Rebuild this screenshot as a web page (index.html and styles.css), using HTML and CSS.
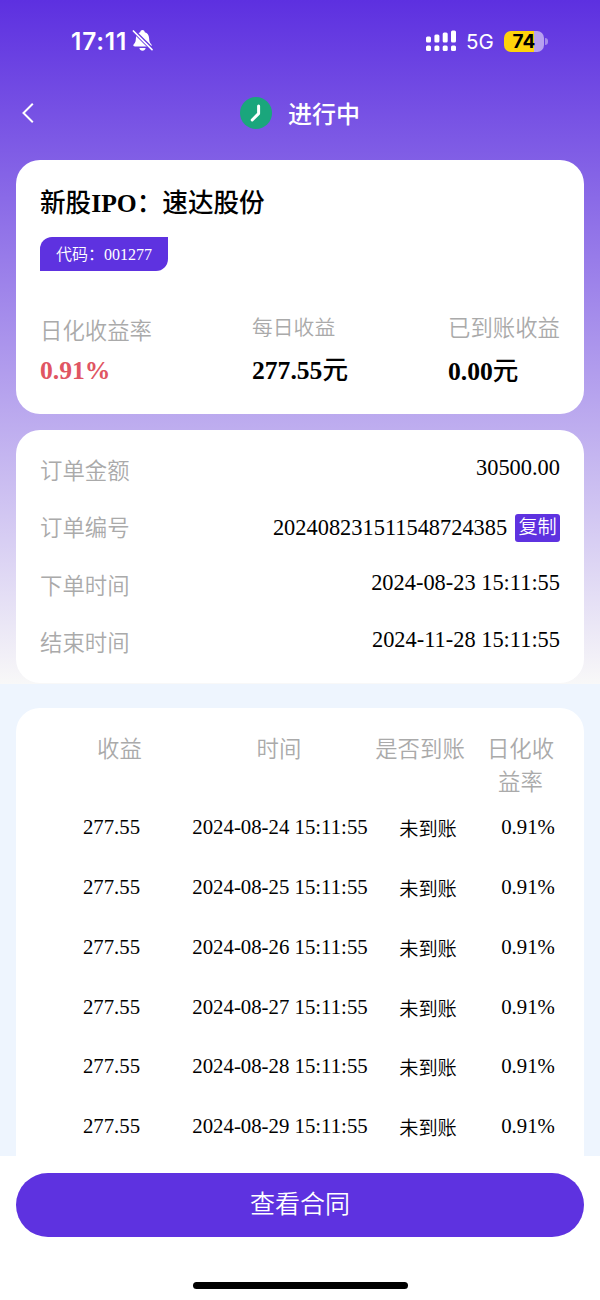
FILE: index.html
```html
<!DOCTYPE html>
<html lang="zh-CN">
<head>
    <meta charset="UTF-8">
    <meta name="viewport" content="width=device-width, initial-scale=1.0">
    <title>进行中</title>
    <link rel="stylesheet" href="styles.css">
</head>
<body>
    <div class="page">
        <div class="top">
            <div class="status-bar">
                <span class="time">17:11</span>
                <svg class="bell" width="22" height="24" viewBox="0 0 22 24">
                    <path d="M3.2 17.5C1.2 17.5.8 16.4 1.8 15.3 3.4 13.6 3.7 12 3.9 9.2C4.1 5.8 5.6 3.9 8.2 3.2C8.4 1.8 9.3 1 10.5 1C11.7 1 12.6 1.8 12.8 3.2C15.4 3.9 16.9 5.8 17.1 9.2C17.3 12 17.6 13.6 19.2 15.3C20.2 16.4 19.8 17.5 17.8 17.5Z" fill="#fff"/>
                    <path d="M7.4 19H13.6C13.3 20.7 12.1 21.7 10.5 21.7C8.9 21.7 7.7 20.7 7.4 19Z" fill="#fff"/>
                    <path d="M1.6 1.8L20.4 20.6" stroke="#673ae1" stroke-width="3.8"/>
                    <path d="M1.4 2L20 20.6" stroke="#fff" stroke-width="1.7" stroke-linecap="round"/>
                </svg>
                <svg class="signal" width="32" height="22" viewBox="0 0 32 22" fill="#fff">
                    <rect x="1" y="6.5" width="5" height="6" rx="1.5"/>
                    <rect x="9.4" y="4.5" width="5" height="8" rx="1.5"/>
                    <rect x="17.7" y="2.5" width="5" height="10" rx="1.5"/>
                    <rect x="26" y="0.5" width="5" height="12" rx="1.5"/>
                    <rect x="1" y="15.5" width="5" height="5.5" rx="1.5"/>
                    <rect x="9.4" y="15.5" width="5" height="5.5" rx="1.5"/>
                    <rect x="17.7" y="15.5" width="5" height="5.5" rx="1.5"/>
                    <rect x="26" y="15.5" width="5" height="5.5" rx="1.5"/>
                </svg>
                <span class="network">5G</span>
                <div class="battery">74</div>
                <div class="battery-cap"></div>
            </div>

            <div class="nav">
                <svg class="back" width="14" height="22" viewBox="0 0 14 22">
                    <path d="M12.8 1.8L3.5 11L12.8 20.2" fill="none" stroke="#fff" stroke-width="2"/>
                </svg>
                <svg class="clock" width="32" height="32" viewBox="0 0 32 32">
                    <circle cx="16" cy="16" r="16" fill="#1aa67c"/>
                    <path d="M18.6 9V16.6L12.2 23" fill="none" stroke="#fff" stroke-width="3" stroke-linecap="round" stroke-linejoin="round"/>
                </svg>
                <span class="nav-title">进行中</span>
            </div>

            <div class="card summary">
                <div class="stock-name"><span class="zh">新股</span>IPO<span class="zh">：速达股份</span></div>
                <div class="stock-code">代码：001277</div>
                <div class="stats">
                    <div class="stat">
                        <div class="stat-label">日化收益率</div>
                        <div class="stat-value red">0.91%</div>
                    </div>
                    <div class="stat daily">
                        <div class="stat-label">每日收益</div>
                        <div class="stat-value">277.55<span class="zh">元</span></div>
                    </div>
                    <div class="stat received">
                        <div class="stat-label">已到账收益</div>
                        <div class="stat-value">0.00<span class="zh">元</span></div>
                    </div>
                </div>
            </div>

            <div class="card order">
                <div class="order-row">
                    <span class="order-label">订单金额</span>
                    <span class="order-value">30500.00</span>
                </div>
                <div class="order-row">
                    <span class="order-label">订单编号</span>
                    <span class="order-value with-copy">202408231511548724385<button class="copy">复制</button></span>
                </div>
                <div class="order-row">
                    <span class="order-label">下单时间</span>
                    <span class="order-value">2024-08-23 15:11:55</span>
                </div>
                <div class="order-row">
                    <span class="order-label">结束时间</span>
                    <span class="order-value">2024-11-28 15:11:55</span>
                </div>
            </div>
        </div>

        <div class="list">
            <div class="list-head">
                <span>收益</span>
                <span>时间</span>
                <span>是否到账</span>
                <span>日化收益率</span>
            </div>
            <div class="list-row">
                <span>277.55</span>
                <span>2024-08-24 15:11:55</span>
                <span class="state">未到账</span>
                <span>0.91%</span>
            </div>
            <div class="list-row">
                <span>277.55</span>
                <span>2024-08-25 15:11:55</span>
                <span class="state">未到账</span>
                <span>0.91%</span>
            </div>
            <div class="list-row">
                <span>277.55</span>
                <span>2024-08-26 15:11:55</span>
                <span class="state">未到账</span>
                <span>0.91%</span>
            </div>
            <div class="list-row">
                <span>277.55</span>
                <span>2024-08-27 15:11:55</span>
                <span class="state">未到账</span>
                <span>0.91%</span>
            </div>
            <div class="list-row">
                <span>277.55</span>
                <span>2024-08-28 15:11:55</span>
                <span class="state">未到账</span>
                <span>0.91%</span>
            </div>
            <div class="list-row">
                <span>277.55</span>
                <span>2024-08-29 15:11:55</span>
                <span class="state">未到账</span>
                <span>0.91%</span>
            </div>
        </div>

        <div class="footer">
            <button class="contract">查看合同</button>
            <div class="home-bar"></div>
        </div>
    </div>
</body>
</html>
```
FILE: styles.css
```css
* {
    box-sizing: border-box;
}

body {
    margin: 0;
    font-family: "Liberation Serif", "Noto Sans CJK SC", serif;
    color: #000;
}

button {
    border: 0;
    padding: 0;
    font-family: inherit;
    color: #fff;
    background-color: #5e32e0;
}

.page {
    width: 600px;
    height: 1300px;
    display: flex;
    flex-direction: column;
    overflow: hidden;
    background-color: #eef5fe;
}

.top {
    flex: none;
    height: 683.5px;
    padding: 0 16px;
    background: linear-gradient(#5d30e0, #f8f8f8);
}

/* status bar */
.status-bar {
    height: 82px;
    padding: 0 36px 0 55px;
    display: flex;
    align-items: center;
    color: #fff;
    font-family: Inter, sans-serif;
}

.time {
    width: 61px;
    font-size: 24.5px;
    font-weight: 600;
    letter-spacing: 0.8px;
}

.signal {
    margin-left: auto;
    margin-right: 9px;
}

.network {
    width: 38px;
    font-size: 20.5px;
}

.battery {
    width: 40px;
    height: 21px;
    border-radius: 7px;
    background: linear-gradient(90deg, #fed30b 75%, #b7a0f0 75%);
    color: #000;
    font-size: 19px;
    font-weight: 700;
    line-height: 21px;
    text-align: center;
}

.battery-cap {
    width: 3px;
    height: 7px;
    margin-left: 1px;
    border-radius: 0 3px 3px 0;
    background-color: #a58bec;
}

/* nav */
.nav {
    height: 78px;
    padding: 0 4px 16px;
    display: flex;
    align-items: center;
}

.clock {
    margin-left: 206px;
    margin-right: 16px;
}

.nav-title {
    padding-top: 4px;
    color: #fff;
    font-size: 24px;
    font-weight: 500;
    line-height: 32px;
}

.card {
    border-radius: 24px;
    background-color: #fff;
}

.zh {
    font-weight: 500;
}

/* summary */
.summary {
    height: 253.5px;
    padding: 24px 24px 0;
}

.stock-name {
    font-size: 25.6px;
    font-weight: 700;
    line-height: 39px;
}

.stock-code {
    width: 128px;
    height: 33.5px;
    margin-top: 14px;
    padding-top: 1px;
    border-radius: 12px 0;
    background-color: #5e32e0;
    color: #fff;
    font-size: 16px;
    font-weight: 350;
    line-height: 33px;
    text-align: center;
}

.stats {
    margin-top: 44px;
    display: flex;
    justify-content: space-between;
}

.stat-label {
    color: #aaa;
    font-size: 22.4px;
    font-weight: 350;
    line-height: 34px;
}

.stat-value {
    font-size: 25.6px;
    font-weight: 700;
    line-height: 44px;
}

.daily .stat-label {
    font-size: 20.8px;
    line-height: 25px;
}

.daily .stat-value {
    line-height: 62px;
}

.received .stat-label {
    line-height: 28px;
}

.received .stat-value {
    line-height: 57px;
}

.red {
    color: #e05562;
}

/* order */
.order {
    height: 253.5px;
    margin-top: 16px;
    padding: 13px 24px 0;
}

.order-row {
    height: 57.5px;
    display: flex;
    justify-content: space-between;
    font-size: 22.4px;
}

.order-label {
    color: #aaa;
    font-weight: 350;
    line-height: 57px;
}

.order-value {
    line-height: 49px;
}

.with-copy {
    height: 55px;
    display: flex;
    align-items: center;
    line-height: 54px;
}

.copy {
    width: 44.8px;
    height: 28px;
    margin-left: 8px;
    border-radius: 3px;
    font-size: 19.2px;
    font-weight: 350;
    line-height: 28px;
}

/* income list */
.list {
    flex: 1;
    min-height: 0;
    margin: 24px 16px 0;
    padding-top: 25.4px;
    border-radius: 24px 24px 0 0;
    background-color: #fff;
    overflow: hidden;
    text-align: center;
}

.list-head {
    padding-left: 24px;
    display: grid;
    grid-template-columns: 159px 160px 122px 79px;
    color: #aaa;
    font-size: 22.4px;
    font-weight: 350;
    line-height: 33.5px;
}

.list-row {
    height: 59.9px;
    padding-left: 24px;
    display: grid;
    grid-template-columns: 143px 194px 102px 98px;
    font-size: 20.8px;
    line-height: 53px;
}

.state {
    font-size: 19.2px;
    font-weight: 350;
    line-height: 59px;
}

/* footer */
.footer {
    flex: none;
    height: 144px;
    padding: 16.5px 16px 0;
    background-color: #fff;
}

.contract {
    display: block;
    width: 100%;
    height: 64px;
    padding-bottom: 5px;
    border-radius: 32px;
    font-size: 25px;
    font-weight: 350;
}

.home-bar {
    width: 215px;
    height: 7px;
    margin: 45px auto 0;
    border-radius: 4px;
    background-color: #000;
}
```
